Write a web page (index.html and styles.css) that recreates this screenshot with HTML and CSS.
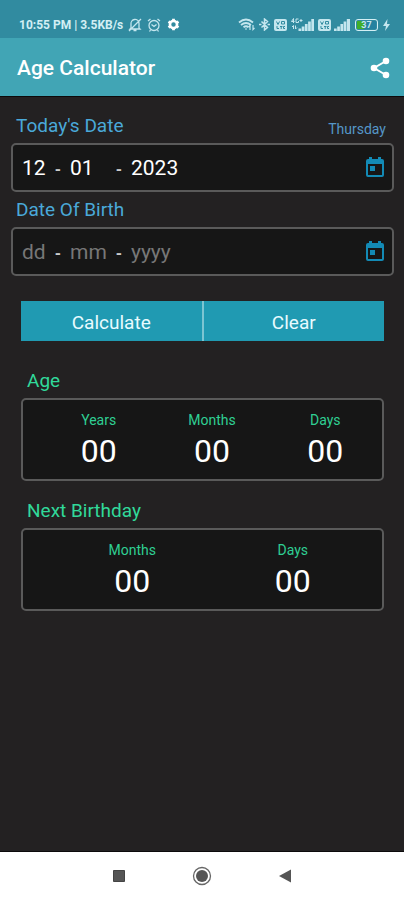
FILE: index.html
```html
<!DOCTYPE html>
<html lang="en">
<head>
<meta charset="utf-8">
<meta name="viewport" content="width=device-width, initial-scale=1">
<title>Age Calculator</title>
<link rel="stylesheet" href="styles.css">
</head>
<body>
<svg class="defs" aria-hidden="true">
  <symbol id="calendar" viewBox="0 0 24 24"><path fill="currentColor" d="M19 3h-1V1h-3v2H9V1H6v2H5a2 2 0 0 0-2 2v14a2 2 0 0 0 2 2h14a2 2 0 0 0 2-2V5a2 2 0 0 0-2-2zm0 16H5V8h14v11zM7 10h5v5H7z"/></symbol>
  <symbol id="volte" viewBox="0 0 13 12"><rect width="13" height="12" rx="2" fill="currentColor"/><path fill="none" stroke="#318ba0" stroke-width="1" d="M2.500 2.500l1.500 3 1.500-3M7.500 2.500h3v2.500h-3zM3 7v2.500h2M6 7.500h2.500M7.200 7.500v2.500M11 7.500H9.500v2H11"/></symbol>
  <symbol id="signal" viewBox="0 0 16 12"><path fill="currentColor" d="M0 9.500h2.700V12H0zM3.200 7.500h2.700V12H3.200zM6.400 5h2.700v7H6.400zM9.600 2.500h2.700V12H9.600zM12.800 0H16v12h-3.200z"/></symbol>
</svg>

<div class="status">
  <span class="clock">10:55 PM | 3.5KB/s</span>
  <svg class="s-bell" viewBox="0 0 14 14" fill="none" stroke="currentColor" stroke-width="1.300"><path d="M3 10V6a4 4 0 0 1 8-1v5l1 1H2zM5.500 12.500h3M1 13L13 1"/></svg>
  <svg class="s-alarm" viewBox="0 0 14 14" fill="none" stroke="currentColor" stroke-width="1.300"><circle cx="7" cy="7.500" r="5"/><path d="M4.500 6.500L7 8.500l2.500-2M1 3l2.500-2M13 3l-2.500-2M3.500 12l-1 1.500M10.500 12l1 1.500"/></svg>
  <svg class="s-gear" viewBox="0 0 14 14"><circle cx="7" cy="7" r="3.800" fill="none" stroke="currentColor" stroke-width="2.800"/><path fill="none" stroke="currentColor" stroke-width="3" d="M7 .8v2M7 11.200v2M1.600 3.900l1.700 1M10.700 9.100l1.700 1M1.600 10.100l1.700-1M10.700 4.900l1.700-1"/></svg>
  <span class="spacer"></span>
  <svg class="s-wifi" viewBox="0 0 17 13" fill="none" stroke="currentColor" stroke-width="1.800"><path d="M1 4.500Q8 -1.500 15 4.500M3 7q5-4 10 0M5.500 9.200q2.500-2 5 0"/><path stroke-width="1.200" d="M7 11h2M12 12V7.500l-1.500 1.500M15 7v4.500l1.500-1.500"/></svg>
  <svg class="s-bt" viewBox="0 0 11 13" fill="none" stroke="currentColor" stroke-width="1.500"><path d="M2.500 3.500l6 6-3 2.500V1l3 2.500-6 6M0 6.500h2.500M8.500 6.500H11"/></svg>
  <svg class="s-volte"><use href="#volte"/></svg>
  <svg class="s-net" viewBox="0 0 23 13"><path fill="none" stroke="currentColor" stroke-width="1" d="M2.500 5V.5L.5 3.500h3M7.500 1H5v3.500h2.500V3M8.500 2.500h3M10 1v3M2.500 11V7.500L1 9M4.500 7.500V11L6 9.500"/><path fill="currentColor" d="M7.500 10.500h2.700V13H7.500zM10.700 8.500h2.700V13h-2.700zM13.900 6h2.700v7h-2.700zM17.100 3.500h2.700V13h-2.700zM20.300 1H23v12h-2.700z"/></svg>
  <svg class="s-volte"><use href="#volte"/></svg>
  <svg class="s-signal"><use href="#signal"/></svg>
  <span class="battery"><span class="charge">37</span></span>
  <svg class="s-bolt" viewBox="0 0 7 12"><path fill="currentColor" d="M4.500 0L0 7h3L2 12l5-7H4z"/></svg>
</div>

<header class="appbar">
  <h1>Age Calculator</h1>
  <button class="icon-btn" type="button" aria-label="Share">
    <svg class="share" viewBox="0 0 20 22"><path fill="none" stroke="currentColor" stroke-width="2" d="M16 4L4 11l12 7"/><g fill="currentColor"><circle cx="16" cy="4" r="3.300"/><circle cx="4" cy="11" r="3.300"/><circle cx="16" cy="18" r="3.300"/></g></svg>
  </button>
</header>

<main>
  <form>
    <div class="label-row"><label for="today-d">Today's Date</label><span class="weekday">Thursday</span></div>
    <div class="date-box">
      <input id="today-d" type="text" inputmode="numeric" value="12" placeholder="dd" aria-label="Today's Date, day">
      <span class="sep">-</span>
      <input type="text" inputmode="numeric" value="01" placeholder="mm" aria-label="Today's Date, month">
      <span class="sep">-</span>
      <input type="text" inputmode="numeric" value="2023" placeholder="yyyy" aria-label="Today's Date, year">
      <button class="icon-btn pick" type="button" aria-label="Pick today's date"><svg class="cal"><use href="#calendar"/></svg></button>
    </div>
    <div class="label-row"><label for="birth-d">Date Of Birth</label></div>
    <div class="date-box">
      <input id="birth-d" type="text" inputmode="numeric" placeholder="dd" aria-label="Date Of Birth, day">
      <span class="sep">-</span>
      <input type="text" inputmode="numeric" placeholder="mm" aria-label="Date Of Birth, month">
      <span class="sep">-</span>
      <input type="text" inputmode="numeric" placeholder="yyyy" aria-label="Date Of Birth, year">
      <button class="icon-btn pick" type="button" aria-label="Pick date of birth"><svg class="cal"><use href="#calendar"/></svg></button>
    </div>
    <div class="actions">
      <button type="button">Calculate</button>
      <button type="reset">Clear</button>
    </div>
  </form>

  <section class="result">
    <h2>Age</h2>
    <dl class="panel three">
      <div><dt>Years</dt><dd>00</dd></div>
      <div><dt>Months</dt><dd>00</dd></div>
      <div><dt>Days</dt><dd>00</dd></div>
    </dl>
  </section>
  <section class="result">
    <h2>Next Birthday</h2>
    <dl class="panel two">
      <div><dt>Months</dt><dd>00</dd></div>
      <div><dt>Days</dt><dd>00</dd></div>
    </dl>
  </section>
</main>

<nav class="sysnav">
  <button class="icon-btn" type="button" aria-label="Recent apps"><svg viewBox="0 0 20 20"><path fill="#555" stroke="#444" d="M4.500 4.500h11v11h-11z"/></svg></button>
  <button class="icon-btn" type="button" aria-label="Home"><svg viewBox="0 0 20 20"><circle cx="10" cy="10" r="8.500" fill="none" stroke="#666" stroke-width="1.300"/><circle cx="10" cy="10" r="6" fill="#555"/></svg></button>
  <button class="icon-btn" type="button" aria-label="Back"><svg viewBox="0 0 20 20"><path fill="#555" d="M4 10l12-6.500v13z"/></svg></button>
</nav>
</body>
</html>
```
FILE: styles.css
```css
* { box-sizing: border-box; }

body {
  margin: 0;
  min-height: 100vh;
  display: flex;
  flex-direction: column;
  background: #232122;
  color: #fff;
  font-family: Roboto, "Liberation Sans", sans-serif;
}

.defs { position: absolute; width: 0; height: 0; }

button, input {
  font: inherit;
  color: inherit;
  border: 0;
  padding: 0;
  margin: 0;
  background: none;
}

.icon-btn { display: flex; }

/* Phone status bar */
.status {
  height: 38px;
  padding: 11px 14px 0 19px;
  display: flex;
  align-items: center;
  background: #318ba0;
  color: #c4e6ee;
}
.status svg { flex: none; }
.clock { font-size: 12px; font-weight: 700; white-space: nowrap; color: #d3eff4; }
.spacer { flex: 1; }
.s-bell { width: 14px; height: 14px; margin-left: 5px; }
.s-alarm { width: 14px; height: 14px; margin-left: 5px; }
.s-gear { width: 13px; height: 13px; margin-left: 6px; color: #fff; }
.s-wifi { width: 17px; height: 13px; }
.s-bt { width: 11px; height: 13px; margin: 0 4px; }
.s-volte { width: 13px; height: 12px; }
.s-net { width: 23px; height: 13px; margin: 0 4px; }
.s-signal { width: 16px; height: 12px; margin: 0 5px 0 3px; }
.battery {
  width: 23px;
  height: 12px;
  flex: none;
  padding: 1px;
  border: 1px solid #d3eff4;
  border-radius: 3px;
}
.charge {
  display: block;
  height: 8px;
  background: linear-gradient(90deg, #3fae2a 37%, #2582a0 37%);
  font-size: 9px;
  line-height: 8px;
  font-weight: 700;
  text-align: center;
}
.s-bolt { width: 7px; height: 12px; margin-left: 5px; }

.appbar {
  height: 59px;
  padding: 2px 14px 0 17px;
  display: flex;
  align-items: center;
  justify-content: space-between;
  background: #41a5b5;
  border-bottom: 1px solid #0c0a0b;
}
.appbar h1 { margin: 0; font-size: 21px; line-height: 28px; font-weight: 500; }
.share { width: 20px; height: 22px; }

main { flex: 1; padding: 14px 10px 0 11px; }

/* Date entry */
.label-row {
  height: 32px;
  padding: 0 8px 0 5px;
  display: flex;
  justify-content: space-between;
  font-size: 19px;
  line-height: 30px;
  color: #4aa9d9;
}
.weekday { font-size: 14px; line-height: 36px; color: #5597c8; }
.date-box {
  height: 49px;
  padding: 0 5px 0 9px;
  display: grid;
  grid-template-columns: 24px 24px 37px 24px 1fr 24px;
  align-items: center;
  background: #161616;
  border: 2px solid #5a5a5a;
  border-radius: 5px;
  font-size: 21px;
}
.date-box + .label-row { margin-top: 3px; }
.date-box input { width: 100%; min-width: 0; outline: none; }
.date-box input::placeholder { color: #777; opacity: 1; }
.sep { padding-top: 4px; text-align: center; font-size: 16px; font-weight: 700; color: #ccc; }
.pick { color: #138ab5; }
.cal { width: 24px; height: 24px; }

.actions {
  margin: 25px 10px 0;
  display: grid;
  grid-template-columns: 1fr 1fr;
  gap: 2px;
  background: #7cc5d2;
}
.actions button {
  height: 40px;
  padding-top: 2px;
  background: #209ab2;
  color: #e8fbff;
  font-size: 19px;
}

/* Results */
.result { margin: 0 10px; }
.result h2 {
  margin: 0;
  padding: 22px 0 0 6px;
  font-size: 19px;
  line-height: 35px;
  font-weight: 400;
  color: #31d99a;
}
.result + .result h2 { padding-top: 12px; }
.panel {
  margin: 0;
  height: 83px;
  display: grid;
  align-items: center;
  text-align: center;
  background: #161616;
  border: 2px solid #5a5a5a;
  border-radius: 5px;
}
.three { grid-template-columns: repeat(3, 1fr); padding: 2px 0 0 19px; }
.two { grid-template-columns: repeat(2, 1fr); padding: 2px 9px 0 29px; }
.panel dt { font-size: 14px; line-height: 20px; color: #2fcf93; }
.panel dd { margin: 0; font-size: 32px; line-height: 42px; }

.sysnav {
  height: 49px;
  display: flex;
  align-items: center;
  justify-content: center;
  gap: 63px;
  background: #fff;
  border-top: 1px solid #0c0a0b;
}
.sysnav svg { width: 20px; height: 20px; }
```
